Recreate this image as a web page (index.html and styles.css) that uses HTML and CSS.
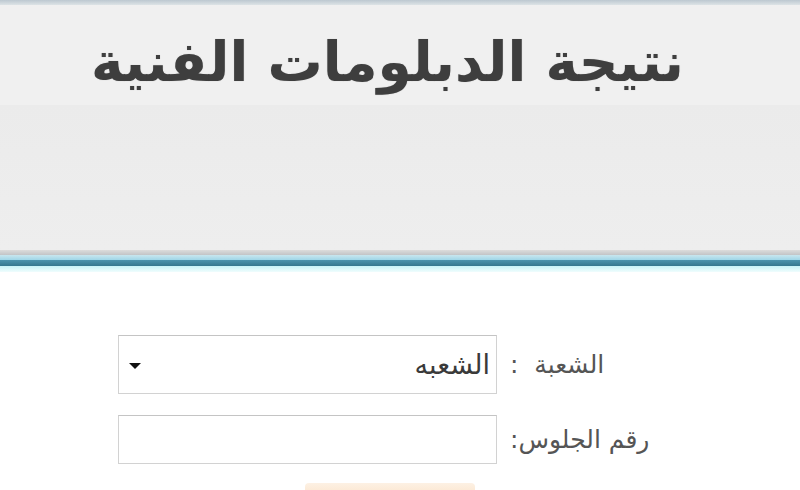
FILE: index.html
```html
<!DOCTYPE html>
<html lang="ar" dir="rtl">
<head>
<meta charset="utf-8">
<title>نتيجة الدبلومات الفنية</title>
<link rel="stylesheet" href="styles.css">
</head>
<body>
<header class="header">
  <div class="top-line"></div>
  <div class="title-strip">
    <h1 class="title">نتيجة الدبلومات الفنية</h1>
  </div>
  <div class="header-body"></div>
  <div class="line-gray"></div>
  <div class="line-light"></div>
  <div class="line-dark"></div>
  <div class="line-cyan"></div>
</header>
<main class="content">
  <form class="form">
    <label class="label" for="branch">الشعبة&nbsp; :</label>
    <div class="select-wrap">
      <select id="branch" class="select">
        <option>الشعبه</option>
      </select>
      <span class="arrow"></span>
    </div>
    <label class="label" for="seat">رقم الجلوس:</label>
    <input id="seat" class="input" type="text">
    <div class="btn-row">
      <button type="button" class="btn" aria-label="عرض النتيجة"></button>
    </div>
  </form>
</main>
</body>
</html>
```
FILE: styles.css
```css
* { box-sizing: border-box; }
html, body {
  margin: 0;
  padding: 0;
  width: 800px;
  height: 490px;
  overflow: hidden;
  background: #fff;
  font-family: "DejaVu Sans", "Noto Sans", sans-serif;
}
.header {
  display: flex;
  flex-direction: column;
}
.top-line {
  height: 5px;
  background: linear-gradient(#bcc8d0, #dde3e6);
}
.title-strip {
  height: 100px;
  background: #f0f0f0;
  padding-right: 116px;
  display: flex;
  align-items: flex-start;
}
.title {
  margin: 20px 0 0 0;
  font-size: 55px;
  font-weight: bold;
  color: #3e3e3e;
  line-height: 74px;
  text-shadow: 0 0 1px rgba(0,0,0,0.25);
}
.header-body {
  height: 145px;
  background: linear-gradient(#ebebeb, #eeeeee);
}
.line-gray {
  height: 5px;
  background: linear-gradient(#dcdcdc, #c2c4c6);
}
.line-light {
  height: 5px;
  background: linear-gradient(#c9e6ee, #9fd6e8);
}
.line-dark {
  height: 6px;
  background: linear-gradient(#4b93ae, #35778f);
}
.line-cyan {
  height: 6px;
  background: linear-gradient(#c6f2f8, #f0fdfd);
}
.content {
  padding-top: 63px;
  padding-right: 145px;
}
.form {
  display: grid;
  grid-template-columns: 153px 379px;
  column-gap: 5px;
  row-gap: 21px;
  align-items: center;
}
.label {
  text-align: left;
  padding-left: 8px;
  font-size: 25px;
  color: #555;
  white-space: nowrap;
}
.select-wrap {
  position: relative;
  height: 59px;
}
.select {
  appearance: none;
  -webkit-appearance: none;
  width: 100%;
  height: 100%;
  border: 1px solid #d2d2d2;
  border-top-color: #c4c4c4;
  background: #fff;
  font-family: inherit;
  font-size: 27px;
  color: #3a3a3a;
  padding: 0 6px 0 30px;
  border-radius: 0;
}
.arrow {
  position: absolute;
  left: 11px;
  top: 28px;
  width: 0;
  height: 0;
  border-left: 6px solid transparent;
  border-right: 6px solid transparent;
  border-top: 6px solid #111;
  pointer-events: none;
}
.input {
  width: 100%;
  height: 49px;
  border: 1px solid #d2d2d2;
  border-top-color: #c4c4c4;
  background: #fff;
  font-family: inherit;
  font-size: 19px;
}
.btn-row {
  grid-column: 1 / span 2;
  display: flex;
  justify-content: flex-end;
  padding-left: 187px;
}
.btn {
  width: 170px;
  height: 40px;
  border: 0;
  border-radius: 4px 4px 0 0;
  background: linear-gradient(#fdf1e4, #f7c999);
  margin-top: -2px;
}
```
